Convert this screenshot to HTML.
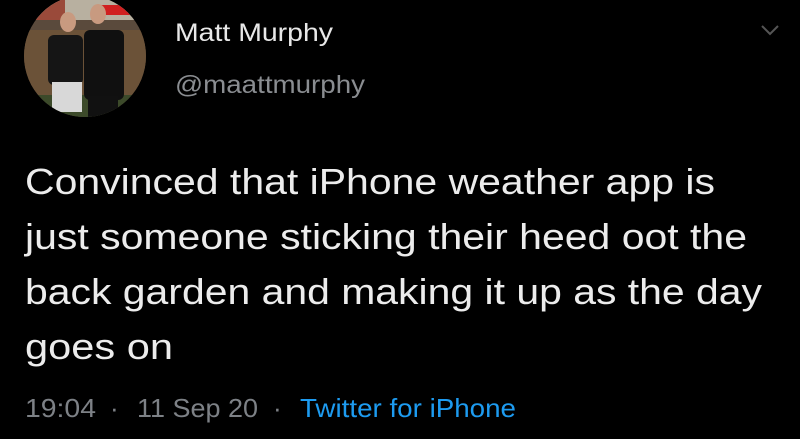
<!DOCTYPE html>
<html><head><meta charset="utf-8"><style>
html,body{margin:0;padding:0;background:#000;width:800px;height:439px;overflow:hidden}
svg{display:block}
text{font-family:"Liberation Sans",sans-serif}
</style></head><body>
<svg width="800" height="439" viewBox="0 0 800 439" xmlns="http://www.w3.org/2000/svg">
<defs><clipPath id="c"><circle cx="85" cy="56" r="61"/></clipPath></defs>
<g clip-path="url(#c)">
<rect x="20" y="-10" width="130" height="130" fill="#5a4a3c"/>
<rect x="20" y="-10" width="130" height="30" fill="#b8b0a0"/>
<rect x="35" y="-5" width="30" height="25" fill="#9a4a3a"/>
<rect x="100" y="5" width="30" height="10" fill="#d02020"/>
<rect x="24" y="30" width="125" height="65" fill="#6b5238"/>
<rect x="24" y="95" width="125" height="30" fill="#3c4a2a"/>
<ellipse cx="68" cy="22" rx="8" ry="10" fill="#c89a80"/>
<ellipse cx="98" cy="14" rx="8" ry="10" fill="#c89a80"/>
<rect x="48" y="35" width="35" height="50" rx="6" fill="#151515"/>
<rect x="84" y="30" width="40" height="70" rx="6" fill="#101010"/>
<rect x="52" y="82" width="30" height="30" fill="#d8d8d8"/>
<rect x="88" y="96" width="30" height="22" fill="#111"/>
</g>
<text x="175" y="41" font-size="25" fill="#e8e8e8" textLength="158" lengthAdjust="spacingAndGlyphs">Matt Murphy</text>
<text x="175" y="93" font-size="25" fill="#8a8d91" textLength="190" lengthAdjust="spacingAndGlyphs">@maattmurphy</text>
<path d="M762 26 L770 34 L778 26" fill="none" stroke="#555" stroke-width="2"/>
<g font-size="36" fill="#ececec">
<text x="25" y="194" textLength="690" lengthAdjust="spacingAndGlyphs">Convinced that iPhone weather app is</text>
<text x="25" y="249" textLength="722" lengthAdjust="spacingAndGlyphs">just someone sticking their heed oot the</text>
<text x="25" y="304" textLength="737" lengthAdjust="spacingAndGlyphs">back garden and making it up as the day</text>
<text x="25" y="359" textLength="148" lengthAdjust="spacingAndGlyphs">goes on</text>
</g>
<g font-size="26">
<text x="25" y="417" fill="#7d8186" textLength="71" lengthAdjust="spacingAndGlyphs">19:04</text>
<text x="110" y="417" fill="#7d8186">·</text>
<text x="137" y="417" fill="#7d8186" textLength="121" lengthAdjust="spacingAndGlyphs">11 Sep 20</text>
<text x="273" y="417" fill="#7d8186">·</text>
<text x="300" y="417" fill="#1d9bf0" textLength="216" lengthAdjust="spacingAndGlyphs">Twitter for iPhone</text>
</g>
</svg>
</body></html>
